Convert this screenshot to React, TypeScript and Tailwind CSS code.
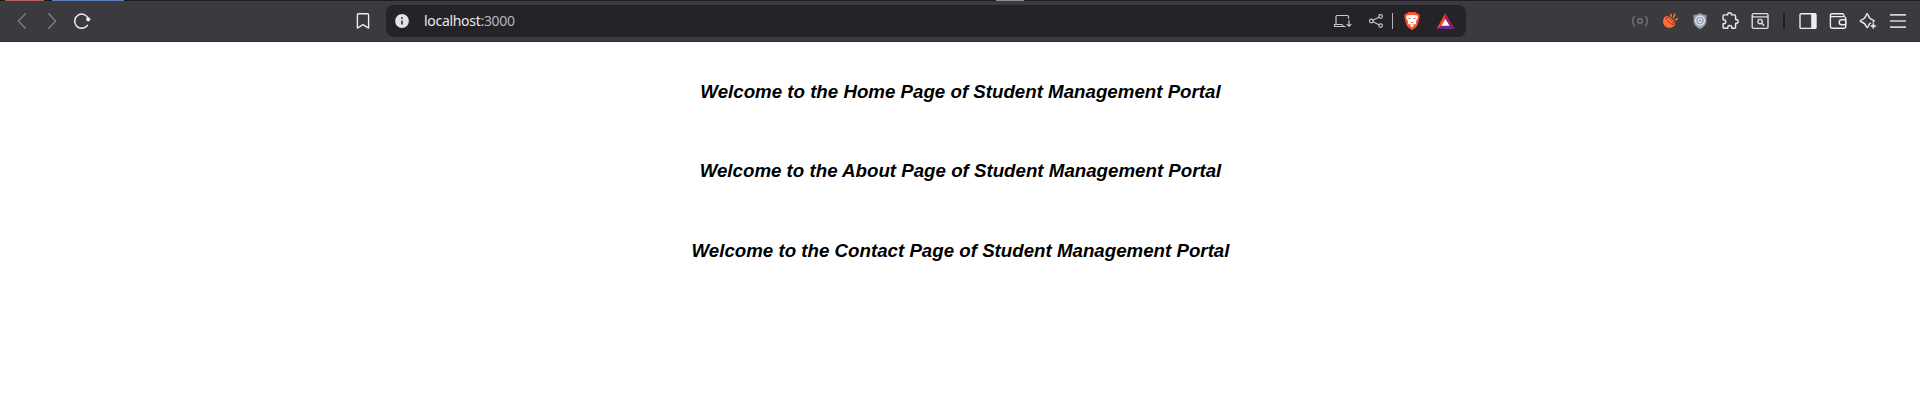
import type { ReactNode } from "react";

function Icon({ children, className = "text-[#ececf1]" }: { children: ReactNode; className?: string }) {
  return (
    <svg
      className={`block h-[30px] w-[30px] shrink-0 ${className}`}
      viewBox="0 0 30 30"
      fill="none"
      stroke="currentColor"
      strokeWidth="1.4"
      strokeLinecap="round"
      strokeLinejoin="round"
    >
      {children}
    </svg>
  );
}

function TabStrip() {
  return (
    <div className="flex h-px bg-[#1d1c22]">
      <div className="ml-[5px] w-[39px] bg-[#b4605c]" />
      <div className="ml-2 w-[72px] bg-[#5c7fb8]" />
      <div className="ml-[872px] w-7 bg-[#8e8e93]" />
    </div>
  );
}

function AddressBar() {
  return (
    <div className="flex h-8 w-[1080px] items-center rounded-[8px] bg-[#242328]">
      <Icon className="ml-px text-[#e3e2e8]">
        <circle cx="15" cy="15" r="6.9" fill="currentColor" stroke="none" />
        <path d="M15 14.4V18.4" stroke="#3a393f" strokeWidth="1.7" strokeLinecap="butt" />
        <circle cx="15" cy="12" r="1" fill="#3a393f" stroke="none" />
      </Icon>
      <span className="ml-[7px] font-['Noto_Sans',sans-serif] text-[14px] leading-5 tracking-[-0.3px] text-[#e8e8ed]">
        localhost<span className="text-[#b5b4ba]">:3000</span>
      </span>
      <div className="ml-auto flex items-center pr-[6px]">
        <Icon className="text-[#c6c5cb]">
          <path d="M21.5 12.5v-2a1 1 0 0 0-1-1h-10.500a1 1 0 0 0-1 1v7.800M7.500 20.500H18.200M7.500 20.500v-2h7.500l1.500 2M22 14.500v5.800M20 18.400l2 2 2-2" strokeWidth="1.2" />
        </Icon>
        <Icon className="ml-1 text-[#c6c5cb]">
          <circle cx="10.3" cy="15" r="1.8" strokeWidth="1.2" />
          <circle cx="19.6" cy="10.4" r="1.8" strokeWidth="1.2" />
          <circle cx="19.6" cy="19.6" r="1.8" strokeWidth="1.2" />
          <path d="m12 14.2 5.9-3M12 15.8l5.9 3" strokeWidth="1.2" />
        </Icon>
        <div className="ml-px h-4 w-px bg-[#b5b4ba]" />
        <Icon className="ml-1">
          <path d="M11.3 6.1h7.4l1.5 1.7 1.5-.1 1.1 2.2-.6 1.2.3 1.2-2 7-1.2 1.6-4.3 3.3-4.3-3.3-1.2-1.6-2-7 .3-1.2-.6-1.2 1.1-2.2 1.5.1z" fill="#fb542b" stroke="none" />
          <path d="m10.8 8.9 1.9.4 2.3-.5 2.3.5 1.9-.4 1.8 2.4-.6 1.5-1.6 2.8.4 1.7-1.2 1.3-1.5-.4-1.5.9-1.5-.9-1.5.4-1.2-1.3.4-1.7-1.6-2.800L9 11.3z" fill="#fff" stroke="none" />
          <path d="m12.900 19.600 2.100-1.200 2.100 1.200-2.100 1.800z" fill="#fff" stroke="none" />
          <path d="m11.500 12.200 1.900.3M18.500 12.200l-1.900.3M13.700 16.200l1.300.5 1.300-.5" stroke="#fb542b" strokeWidth=".8" />
        </Icon>
        <Icon className="ml-[3px]">
          <path d="M15.5 7 6.5 22.9l6-3.4 3-5.3z" fill="#ff4724" stroke="none" />
          <path d="m15.5 7 9 15.9-6-3.4-3-5.3z" fill="#9e1f63" stroke="none" />
          <path d="M6.5 22.9h18l-6-3.4h-6z" fill="#662d91" stroke="none" />
          <path d="m15.5 13 4 6.800h-8z" fill="#fff" stroke="none" />
        </Icon>
      </div>
    </div>
  );
}

function Extensions() {
  return (
    <div className="ml-auto flex items-center pr-[7px]">
      <Icon className="text-[#6b6a70]">
        <circle cx="15" cy="15" r="2.3" strokeWidth="1.7" />
        <path d="M9.4 10.3q-3.600 4.700 0 9.400M20.600 10.3q3.600 4.700 0 9.400" strokeWidth="1.7" />
      </Icon>
      <Icon className="text-[#ff6c37]">
        <path d="M10.200 10.400c-2.700 2.700-2.900 6.900-.400 9.500 2.700 2.700 7.100 2.500 9.800-.500z" fill="currentColor" stroke="none" />
        <ellipse cx="15" cy="14.900" rx="6.500" ry="2.900" transform="rotate(44 15 14.900)" fill="currentColor" stroke="none" />
        <ellipse cx="15" cy="14.900" rx="4.900" ry="1.500" transform="rotate(44 15 14.900)" stroke="#6b4034" strokeWidth=".8" />
        <path d="M16.300 10.200l-.5-1.900M18.400 11.500l1.500-3.300M20 14.100l2.300-1.400" strokeWidth="1.6" />
      </Icon>
      <Icon>
        <path d="M15 7.3c2 1.4 4 1.8 6.2 1.8v5.6c0 4.1-3 6.7-6.2 8.3-3.2-1.6-6.2-4.2-6.2-8.3V9.1c2.2 0 4.2-.4 6.2-1.8" fill="#98a2b5" stroke="#7d8799" strokeWidth=".7" />
        <circle cx="15" cy="14.6" r="4.5" stroke="#e6eaf2" strokeWidth="1.2" />
        <path d="M16.6 13.6a1.9 1.9 0 1 0 .2 1.8" stroke="#e6eaf2" strokeWidth="1.1" />
      </Icon>
      <Icon>
        <path d="M9.6 8.9h3V8.7a2 2 0 0 1 4 0v.2h3a1 1 0 0 1 1 1v3.6h.5a2 2 0 0 1 0 4h-.5v3.7a1 1 0 0 1-1 1h-2.8v-.7a2 2 0 0 0-4 0v.7H9.1a1 1 0 0 1-1-1v-3.4h.6a2 2 0 0 0 0-4h-.6V9.9a1 1 0 0 1 1-1z" strokeWidth="1.4" />
      </Icon>
      <Icon className="text-[#dddce2]">
        <rect x="7.2" y="7.6" width="15.8" height="14.8" rx="1.4" strokeWidth="1.4" />
        <path d="M7.5 10.9h15.2" strokeWidth="1.4" />
        <circle cx="15.1" cy="15.6" r="2.2" />
        <path d="m16.8 17.3 1.9 1.9" strokeWidth="1.6" />
      </Icon>
      <div className="mx-2 h-4 w-[2px] bg-[#1f1e23]" />
      <Icon>
        <rect x="7" y="7.7" width="16" height="14.7" rx="1" strokeWidth="1.4" />
        <path d="M18.2 7.7H23v14.7h-4.8z" fill="currentColor" stroke="none" />
      </Icon>
      <Icon>
        <path d="M8.9 7.7h10.2a1.8 1.8 0 0 1 1.8 1.8M7.4 9.2a1.5 1.5 0 0 0 1.5 1.4h12a1.8 1.8 0 0 1 1.8 1.8v8a1.8 1.8 0 0 1-1.8 1.8H9a1.6 1.6 0 0 1-1.6-1.6V9.2a1.5 1.5 0 0 1 1.5-1.5" />
        <path d="M22.7 13.7h-4a2.5 2.5 0 0 0 0 5h4z" />
      </Icon>
      <Icon>
        <path d="M17.5 17.2c-1.4.6-1.7 1.2-2.4 3.2-.5 1.5-1.4 1.5-1.9 0-.9-2.8-1.6-3.4-4.6-4.4-1.8-.6-1.8-1.5 0-2.1 3-1 3.7-1.7 4.6-4.8.5-1.8 1.4-1.8 1.9 0 .9 3.1 1.6 3.8 4.6 4.8 1.9.6 1.9 1.4.4 2" />
        <path d="m20.3 17 .8 2.3 2.2.7-2.2.8-.8 2.2-.8-2.2-2.2-.8 2.2-.7z" fill="currentColor" strokeWidth=".5" />
      </Icon>
      <Icon className="text-[#d4d3d9]">
        <path d="M7 8.8h16M7 15h16M7 21.2h16" strokeWidth="1.7" strokeLinecap="butt" />
      </Icon>
    </div>
  );
}

function Toolbar() {
  return (
    <header className="flex h-[41px] items-center border-b border-[#2c2b31] bg-[#3b3a3f] pl-[7px]">
      <Icon className="text-[#818086]">
        <path d="m18.4 7.8-7 7.2 7 7.2" strokeWidth="1.3" />
      </Icon>
      <Icon className="text-[#818086]">
        <path d="m11.7 7.8 7 7.2-7 7.2" strokeWidth="1.3" />
      </Icon>
      <Icon className="text-[#f0f0f4]">
        <path d="M20.5 19.4A7.1 7.1 0 1 1 21.5 13" strokeWidth="1.5" />
        <circle cx="21.2" cy="13.3" r="2.1" fill="currentColor" stroke="none" />
      </Icon>
      <Icon className="mr-2 ml-[251px] text-[#ececf1]">
        <path d="M9.4 8.9a1.2 1.2 0 0 1 1.2-1.2h8.8a1.2 1.2 0 0 1 1.2 1.2v13.2L15 18.7l-5.6 3.4z" />
      </Icon>
      <AddressBar />
      <Extensions />
    </header>
  );
}

const pages = ["Home", "About", "Contact"];

export default function App() {
  return (
    <div className="min-h-[401px] bg-white">
      <TabStrip />
      <Toolbar />
      <main className="flex flex-col items-center gap-[58px] pt-[39px] pl-px font-['Liberation_Sans',Arial,sans-serif] text-black">
        {pages.map((page) => (
          <h3 key={page} className="text-[18.72px] leading-[21.4px] font-bold italic">
            Welcome to the {page} Page of Student Management Portal
          </h3>
        ))}
      </main>
    </div>
  );
}
